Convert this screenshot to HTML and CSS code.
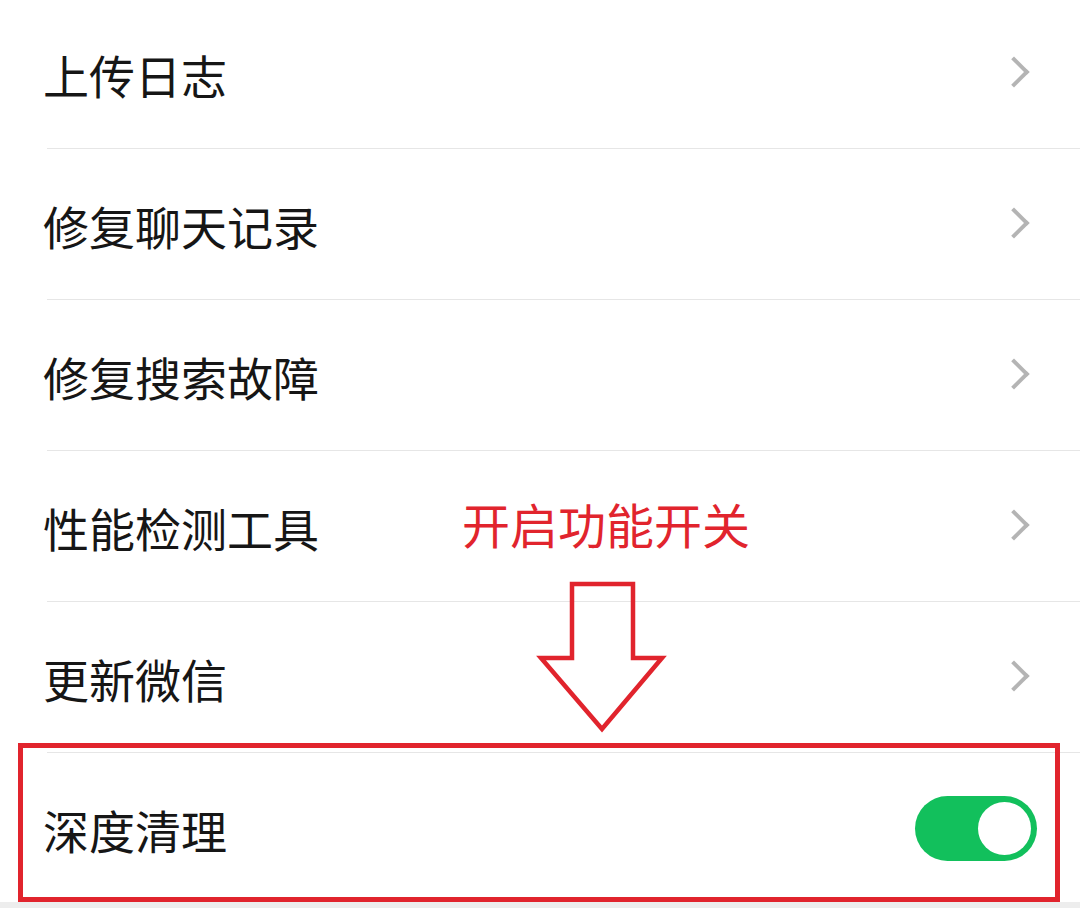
FILE: index.html
```html
<!DOCTYPE html>
<html lang="zh-CN">
<head>
  <meta charset="UTF-8" />
  <meta name="viewport" content="width=device-width, initial-scale=1.0"/>
  <title>设置</title>
  <link rel="stylesheet" href="styles.css">
</head>
<body>
  <div class="page">
    <ul class="menu">
      <li class="item"><span class="label">上传日志</span><span class="chevron"></span></li>
      <li class="item"><span class="label">修复聊天记录</span><span class="chevron"></span></li>
      <li class="item"><span class="label">修复搜索故障</span><span class="chevron"></span></li>
      <li class="item"><span class="label">性能检测工具</span><span class="chevron"></span></li>
      <li class="item"><span class="label">更新微信</span><span class="chevron"></span></li>
      <li class="item"><span class="label">深度清理</span><span class="switch on"><span class="knob"></span></span></li>
    </ul>

    <!-- annotation layer -->
    <div class="note">开启功能开关</div>
    <svg class="arrow" width="145" height="165" viewBox="530 575 145 165">
      <polygon points="572,584 633,584 633,658 662,658 602,729 541,658 572,658"
               fill="none" stroke="#e1242d" stroke-width="4.5" stroke-linejoin="miter"/>
    </svg>
    <div class="highlight"></div>
  </div>
</body>
</html>
```

FILE: styles.css
```css
body {
  margin: 0;
  background-color: #ededed;
  font-family: "Noto Sans CJK SC", "Noto Sans", sans-serif;
  color: #161616;
}

.page {
  position: relative;
  width: 1080px;
  height: 908px;
  overflow: hidden;
  background-color: #ededed;
}

.menu {
  list-style: none;
  margin: -3px 0 0 0;
  padding: 0;
  background-color: #fff;
}

.item {
  display: flex;
  align-items: center;
  justify-content: space-between;
  height: 150px;
  padding: 0 43px 0 43px;
  position: relative;
}

.item + .item::before {
  content: "";
  position: absolute;
  top: 0;
  left: 47px;
  right: 0;
  height: 1px;
  background-color: #e6e6e6;
}

.item + .item {
  border-top: 1px solid transparent;
}

.label {
  font-size: 46px;
  line-height: 1;
  padding-top: 3px;
}

.chevron {
  width: 22px;
  height: 22px;
  border-top: 4px solid #b4b4b4;
  border-right: 4px solid #b4b4b4;
  transform: rotate(45deg);
  margin-right: 12px;
  box-sizing: border-box;
}

.switch {
  width: 122px;
  height: 65px;
  border-radius: 33px;
  background-color: #12c05c;
  display: flex;
  align-items: center;
  justify-content: flex-end;
  padding: 6px;
  box-sizing: border-box;
  margin-top: 2px;
}

.knob {
  width: 53px;
  height: 53px;
  border-radius: 50%;
  background-color: #fff;
}

.note {
  position: absolute;
  left: 462px;
  top: 499px;
  font-size: 48px;
  line-height: 48px;
  color: #e1242d;
}

.arrow {
  position: absolute;
  left: 530px;
  top: 575px;
}

.highlight {
  position: absolute;
  left: 18px;
  top: 743px;
  width: 1042px;
  height: 159px;
  border: 5px solid #e1242d;
  box-sizing: border-box;
}
```
